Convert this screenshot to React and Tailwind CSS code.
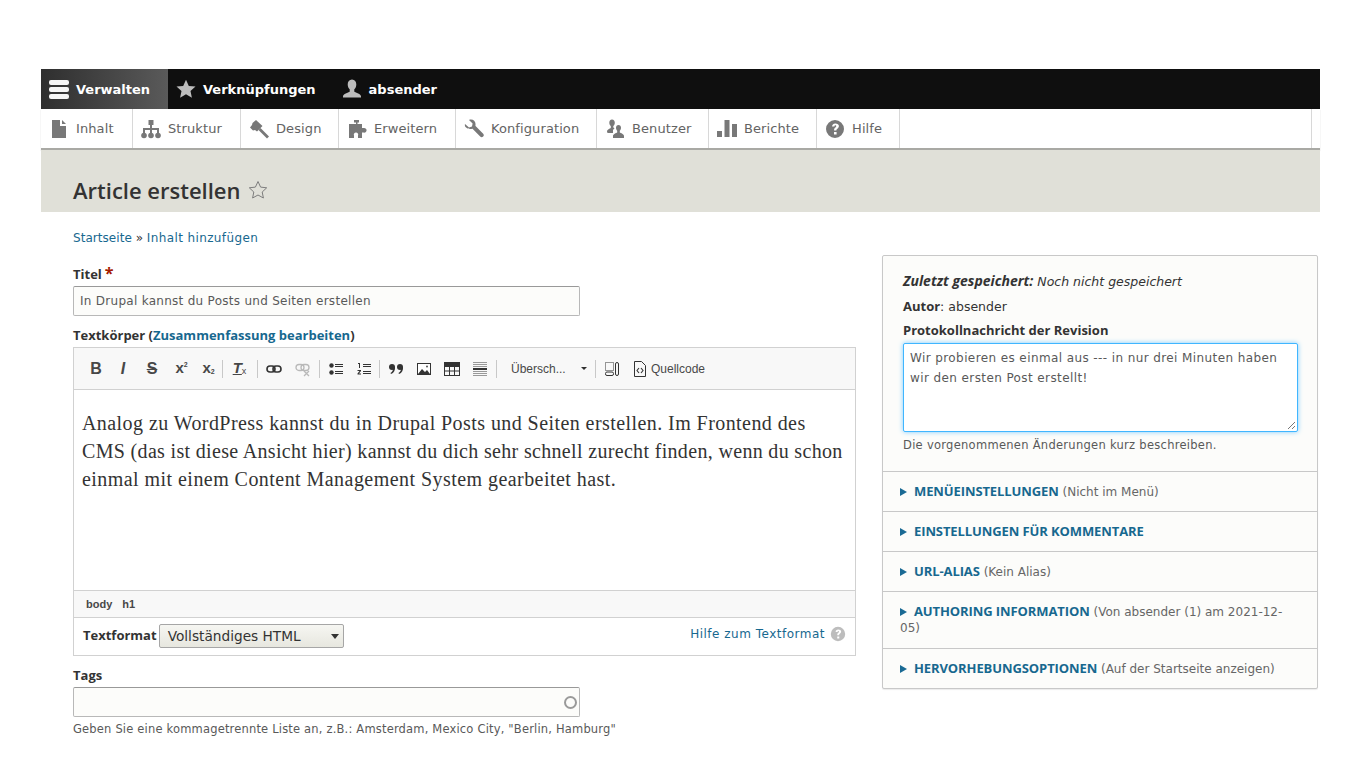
import React from "react";

const sans = "font-['DejaVu_Sans',Verdana,sans-serif]";

const Svg = ({ size = 20, vb = "0 0 20 20", fill = "#787878", className = "", children }) => (
  <svg width={size} height={size} viewBox={vb} fill={fill} className={"shrink-0 " + className}>
    {children}
  </svg>
);

// Toolbar icons
const IconPage = () => (
  <Svg>
    <path d="M3 1h8v6h6v12H3z" />
    <path d="M13 1l4 4h-4z" />
  </Svg>
);
const IconTree = () => (
  <Svg>
    <path d="M7.500 1h5v5h-5z" />
    <path d="M9 6h2v3h7v5h-2v-3h-5v3H9v-3H4v3H2V9h7z" />
    <circle cx="3" cy="16.500" r="2.800" />
    <circle cx="10" cy="16.500" r="2.800" />
    <circle cx="17" cy="16.500" r="2.800" />
  </Svg>
);
const IconHammer = () => (
  <Svg>
    <path d="M7 1l6.500 6-5.500 5.500-2-1.500-2 .5L1 8.500 3 6l.5-2z" />
    <path d="M11.500 9L20 17.500 18 19.500 9.500 11z" />
  </Svg>
);
const IconPuzzle = () => (
  <Svg>
    <path d="M7 1h5v2.500h-1.500V5H15v4h1.500a2.400 2.400 0 110 4.600H15V19h-4v-2.500a2.200 2.200 0 10-4 0V19H2V5h7V3.500H7z" />
  </Svg>
);
const IconWrench = () => (
  <Svg>
    <path d="M1 5l4 3.500 3-1 .6-3L5 1c3.400-1.400 7 1 6.500 4.800-.1.700-.1 1 .3 1.400l7.400 7.600c.9 1 .7 2-.1 2.800s-1.900 1-2.900-.1L9 10.200c-.4-.4-.7-.4-1.400-.3C3.800 10.500 0 8.500 1 5z" />
  </Svg>
);
const IconPeople = () => (
  <Svg>
    <path d="M7 .5c1.800 0 2.800 1.400 2.800 3.200 0 1.500-.7 2.700-1.500 3.300v1.600l1.200.6-1.500 1.800V14H2.500L2 12.500c0-2 3-3 3.800-3.500V7C5 6.400 4.300 5.200 4.300 3.700 4.300 1.900 5.200.5 7 .5z" />
    <path d="M13.500 6c1.600 0 2.500 1.300 2.500 2.800 0 1.300-.6 2.400-1.200 3v1.700c1 .6 4.200 1.500 4.200 3.500v2H8v-2c0-2 3.200-2.900 4.200-3.500v-1.700c-.6-.6-1.200-1.700-1.200-3C11 7.300 11.900 6 13.500 6z" />
  </Svg>
);
const IconBars = () => (
  <Svg>
    <path d="M0 12h5v6H0zM7.500 1h5v17h-5zM15 5h5v13h-5z" />
  </Svg>
);
const IconHelp = ({ size = 20, fill = "#787878" }) => (
  <Svg size={size} fill={fill}>
    <path
      fillRule="evenodd"
      d="M10 1a9 9 0 110 18 9 9 0 010-18zM7 7.600h2.400c.1-.9.400-1.300 1-1.300.5 0 .9.300.9.800s-.3.800-.9 1.300c-.9.700-1.300 1.300-1.300 2.500v.6h2.300v-.4c0-.6.300-.9.900-1.400.9-.7 1.600-1.400 1.600-2.700 0-1.700-1.600-2.600-3.600-2.600-2.100 0-3.200 1.300-3.300 3.400zM9 13h2.600v2.500H9z"
    />
  </Svg>
);
const IconStar = ({ size = 20, fill = "#bdbdbd" }) => (
  <Svg size={size} fill={fill}>
    <path d="M10 .8l2.800 6.100 6.700.7-5 4.500 1.400 6.600L10 15.300l-5.900 3.400 1.400-6.600-5-4.500 6.700-.7z" />
  </Svg>
);
const IconUser = () => (
  <Svg size={20} fill="#bdbdbd">
    <path d="M10 .5c2.800 0 4.300 2.200 4.300 4.900 0 2.200-1 3.900-2 4.800v2.500c1.500.9 6.700 2 6.700 4.800v1H1v-1c0-2.800 5.200-3.900 6.700-4.800v-2.500c-1-.9-2-2.600-2-4.800C5.700 2.700 7.200.5 10 .5z" />
  </Svg>
);

const TopItem = ({ icon, label, active }) => (
  <div
    className={
      "flex h-10 items-center gap-[7px] " +
      (active ? "w-[127px] bg-gradient-to-r from-[#2f2f2f] to-[#5a5a5a] pl-[8px]" : "px-[8px]")
    }
  >
    {icon}
    <span className="pt-[1px] text-[13px] font-bold text-white">{label}</span>
  </div>
);

const TrayItem = ({ icon, label, width }) => (
  <div
    className="flex h-full items-center gap-[7px] border-r border-[#d8d8d8] pl-[8px]"
    style={{ width }}
  >
    {icon}
    <span className="text-[13px] tracking-[0.1px] text-[#636363]">{label}</span>
  </div>
);

// CKEditor button box
const Btn = ({ children, width = 28 }) => (
  <span className="flex h-5 items-center justify-center" style={{ width }}>
    {children}
  </span>
);

const Glyph = ({ className = "", children }) => (
  <span className={"font-['Liberation_Sans',Arial,sans-serif] text-[#474747] " + className}>{children}</span>
);

const Toolbar = () => (
  <div className="flex h-[42px] items-center border-b border-[#d1d1d1] bg-[#f8f8f8] pl-[8px]">
    <Btn><Glyph className="text-[16px] font-bold">B</Glyph></Btn>
    <Btn width={26}><Glyph className="text-[16px] font-bold italic">I</Glyph></Btn>
    <Btn width={32}><Glyph className="text-[16px] font-bold line-through">S</Glyph></Btn>
    <Btn width={27}>
      <Glyph className="text-[15px] font-bold">x</Glyph>
      <Glyph className="-mt-[7px] text-[7px] font-bold">2</Glyph>
    </Btn>
    <Btn width={27}>
      <Glyph className="text-[15px] font-bold">x</Glyph>
      <Glyph className="mt-[7px] text-[7px] font-bold">2</Glyph>
    </Btn>
    <span className="h-[18px] w-px bg-[#c8c8c8]" />
    <Btn width={33}>
      <Glyph className="text-[15px] font-bold italic underline">T</Glyph>
      <Glyph className="mt-[7px] text-[9px]">x</Glyph>
    </Btn>
    <span className="ml-[1px] h-[18px] w-px bg-[#c8c8c8]" />
    <Btn width={32}>
      <svg width="16" height="16" viewBox="0 0 16 16" fill="none" stroke="#333" strokeWidth="1.6">
        <rect x="1" y="5" width="8" height="6" rx="3" />
        <rect x="7" y="5" width="8" height="6" rx="3" />
      </svg>
    </Btn>
    <Btn width={26}>
      <svg width="16" height="16" viewBox="0 0 16 16" fill="none" stroke="#b9b9b9" strokeWidth="1.3">
        <rect x="1" y="3.500" width="8" height="6" rx="3" />
        <rect x="6" y="3.500" width="8" height="6" rx="3" />
        <path d="M9 10l5 5M14 10l-5 5" />
      </svg>
    </Btn>
    <span className="ml-[3px] h-[18px] w-px bg-[#c8c8c8]" />
    <Btn width={31}>
      <svg width="16" height="16" viewBox="0 0 16 16" fill="#333">
        <circle cx="3.500" cy="4.500" r="2.200" />
        <circle cx="3.500" cy="11.500" r="2.200" />
        <path d="M7 3h8v1H7zM7 5h8v1H7zM7 10h8v1H7zM7 12h8v1H7z" />
      </svg>
    </Btn>
    <Btn width={25}>
      <svg width="16" height="16" viewBox="0 0 16 16" fill="#333">
        <path d="M2 2h2v5H3V3H2zM1.500 9H5v1L3 12.500h2v1H1.500v-1l2-2.500h-2zM7 3h8v1H7zM7 5h8v1H7zM7 10h8v1H7zM7 12h8v1H7z" />
      </svg>
    </Btn>
    <span className="ml-[3px] h-[18px] w-px bg-[#c8c8c8]" />
    <Btn width={32}>
      <svg width="16" height="16" viewBox="0 0 16 16" fill="#333">
        <circle cx="4" cy="6" r="3" />
        <path d="M5 6h2c.3 3-1 6-4 7l-.5-1C4 11.300 5 9.500 5 8z" />
        <circle cx="12" cy="6" r="3" />
        <path d="M13 6h2c.3 3-1 6-4 7l-.5-1c1.500-.7 2.500-2.500 2.500-4z" />
      </svg>
    </Btn>
    <Btn width={24}>
      <svg width="16" height="16" viewBox="0 0 16 16">
        <rect x="1.500" y="2.500" width="13" height="11" fill="#fff" stroke="#333" />
        <path d="M2 13l4-5 3 3 2-2 3 4z" fill="#333" />
        <circle cx="11" cy="5.500" r="1" fill="#555" />
      </svg>
    </Btn>
    <Btn width={32}>
      <svg width="16" height="16" viewBox="0 0 16 16" fill="none" stroke="#333">
        <rect x="0.500" y="1.500" width="15" height="13" />
        <path d="M.5 5.500h15M.5 10h15M5.500 5.500v9M10.500 5.500v9" />
        <rect x="0" y="1" width="16" height="4" fill="#333" stroke="none" />
      </svg>
    </Btn>
    <Btn width={24}>
      <svg width="16" height="16" viewBox="0 0 16 16" fill="#333">
        <path d="M1 7h14v2H1z" />
        <path fill="#999" d="M1 1h14v1H1zM1 3h14v1H1zM1 5h14v1H1zM1 10h14v1H1zM1 12h14v1H1zM1 14h14v1H1z" />
      </svg>
    </Btn>
    <span className="ml-[4px] h-[18px] w-px bg-[#c8c8c8]" />
    <div className="flex w-[98px] items-center pl-[14px] font-['Liberation_Sans',Arial,sans-serif] text-[12px] text-[#484848]">
      <span>Übersch...</span>
      <span className="ml-[15px] h-0 w-0 border-x-[3px] border-t-[3px] border-x-transparent border-t-[#2f2f2f]" />
    </div>
    <span className="h-[18px] w-px bg-[#c8c8c8]" />
    <Btn width={32}>
      <svg width="16" height="16" viewBox="0 0 16 16" fill="none" stroke="#333">
        <path d="M1.500 1.500h8v8h-8z" strokeDasharray="1 1" />
        <rect x="1.500" y="11" width="8" height="3.500" rx="1.500" />
        <rect x="11.500" y="1.500" width="3" height="13" rx="1.500" />
      </svg>
    </Btn>
    <span className="flex items-center gap-[4px] pl-[5px]">
      <svg width="14" height="16" viewBox="0 0 14 16" fill="none" stroke="#333">
        <path d="M1.500 .5h7l4 4v11h-11z" />
        <path d="M6 7L4 9.500 6 12M8 7l2 2.500L8 12" strokeWidth="1.100" />
      </svg>
      <span className="font-['Liberation_Sans',Arial,sans-serif] text-[12px] text-[#484848]">Quellcode</span>
    </span>
  </div>
);

const Detail = ({ title, sub, h = 40 }) => (
  <div
    className="border-t border-[#c8c8c8] px-[17px] pt-[11px] text-[12px] leading-[16px] text-[#666]"
    style={{ height: h }}
  >
    <span className="mr-[7px] inline-block h-0 w-0 border-y-[4px] border-l-[7px] border-y-transparent border-l-[#1a6a94]" />
    <span className="font-['Open_Sans',sans-serif] text-[13px] font-bold tracking-[-0.1px] text-[#17688f]">{title}</span>
    {sub && <span> {sub}</span>}
  </div>
);

export default function App() {
  return (
    <div className={"min-h-[768px] bg-white pl-[41px] pr-[46px] pt-[69px] " + sans}>
      {/* Admin toolbar */}
      <div className="flex h-10 items-center bg-[#0f0f0f]">
        <TopItem
          active
          label="Verwalten"
          icon={
            <svg width="20" height="20" viewBox="0 0 20 20" fill="#f5f5f5">
              <rect x="0" y="1" width="20" height="5" rx="2" />
              <rect x="0" y="8" width="20" height="5" rx="2" />
              <rect x="0" y="15" width="20" height="5" rx="2" />
            </svg>
          }
        />
        <TopItem label="Verknüpfungen" icon={<IconStar />} />
        <div className="w-[10px]" />
        <TopItem label="absender" icon={<IconUser />} />
      </div>

      {/* Tray */}
      <div className="h-[41px] border-b-2 border-[#a9a9a4] bg-white shadow-[0_1px_1px_rgba(0,0,0,0.2)]">
        <div className="flex h-[39px]">
          <TrayItem width={92} label="Inhalt" icon={<IconPage />} />
          <TrayItem width={108} label="Struktur" icon={<IconTree />} />
          <TrayItem width={98} label="Design" icon={<IconHammer />} />
          <TrayItem width={117} label="Erweitern" icon={<IconPuzzle />} />
          <TrayItem width={141} label="Konfiguration" icon={<IconWrench />} />
          <TrayItem width={112} label="Benutzer" icon={<IconPeople />} />
          <TrayItem width={108} label="Berichte" icon={<IconBars />} />
          <TrayItem width={83} label="Hilfe" icon={<IconHelp />} />
          <div className="flex-1" />
          <div className="w-[9px] border-l border-[#d8d8d8]" />
        </div>
      </div>

      {/* Page title */}
      <div className="flex h-[62px] items-center bg-[#e0e0d8] pl-[32px] pt-[18px]">
        <h1 className="font-['Open_Sans',sans-serif] text-[22px] font-semibold text-[#333]">
          Article erstellen
        </h1>
        <svg width="20" height="20" viewBox="0 0 20 20" fill="none" stroke="#7d7d7d" className="ml-[7px]">
          <path d="M10 1.500l2.600 5.600 6.100.7-4.500 4.200 1.200 6-5.400-3-5.400 3 1.200-6L1.300 7.800l6.100-.7z" />
        </svg>
      </div>

      {/* Breadcrumb */}
      <div className="pl-[32px] pt-[18px] text-[12px] leading-[16px] text-[#333]">
        <a className="tracking-[0.05px] text-[#17688f]">Startseite</a> » <a className="tracking-[0.38px] text-[#17688f]">Inhalt hinzufügen</a>
      </div>

      <div className="flex items-start pl-[32px] pt-[18px]">
        {/* Left column */}
        <div className="w-[783px]">
          <div className="flex h-[20px] items-center pt-[1px] font-['Open_Sans',sans-serif] text-[13px] font-bold text-[#333]">
            Titel <span className="mb-[3px] ml-[3px] text-[16px] leading-none text-[#a51b00]">*</span>
          </div>
          <div className="mt-[2px] flex h-[30px] w-[507px] items-center rounded-[2px] border border-[#b8b8b8] border-t-[#999] bg-[#fcfcfa] pl-[6px] text-[12px] tracking-[0.28px] text-[#595959]">
            In Drupal kannst du Posts und Seiten erstellen
          </div>

          <div className="mt-[10px] h-[21px] font-['Open_Sans',sans-serif] text-[13px] font-bold leading-[18px] text-[#333]">
            Textkörper (<a className="text-[#17688f]">Zusammenfassung bearbeiten</a>)
          </div>

          <div className="border border-[#d1d1d1]">
            <Toolbar />
            <div className="h-[200px] whitespace-nowrap bg-white px-[8px] pt-[19px] font-['Liberation_Serif',Georgia,serif] text-[20px] leading-[28px] text-[#333]">
              <div className="tracking-[0.43px]">Analog zu WordPress kannst du in Drupal Posts und Seiten erstellen. Im Frontend des</div>
              <div className="tracking-[0.33px]">CMS (das ist diese Ansicht hier) kannst du dich sehr schnell zurecht finden, wenn du schon</div>
              <div className="tracking-[0.45px]">einmal mit einem Content Management System gearbeitet hast.</div>
            </div>
            <div className="flex h-[28px] items-center gap-[10px] border-y border-[#d1d1d1] bg-[#f8f8f8] pl-[12px] font-['Liberation_Sans',Arial,sans-serif] text-[11px] font-bold text-[#484848]">
              <span>body</span>
              <span>h1</span>
            </div>
            <div className="flex h-[37px] items-center justify-between px-[9px] pb-[1px]">
              <div className="flex items-center gap-[2px]">
                <span className="font-['Open_Sans',sans-serif] text-[13px] font-bold text-[#333]">Textformat</span>
                <div className="flex h-[24px] w-[185px] items-center justify-between rounded-[2px] border border-[#a6a6a6] bg-gradient-to-b from-[#f6f6f2] to-[#e7e7df] pl-[8px] pr-[4px] text-[13.7px] text-[#333]">
                  <span>Vollständiges HTML</span>
                  <span className="h-0 w-0 border-x-[4px] border-t-[5px] border-x-transparent border-t-[#333]" />
                </div>
              </div>
              <div className="flex items-center gap-[5px] pb-[5px]">
                <a className="text-[12px] tracking-[0.5px] text-[#17688f]">Hilfe zum Textformat</a>
                <IconHelp size={16} fill="#bdbdbd" />
              </div>
            </div>
          </div>

          <div className="mt-[10px] h-[20px] font-['Open_Sans',sans-serif] text-[13px] font-bold leading-[18px] text-[#333]">Tags</div>
          <div className="mt-[1px] flex h-[30px] w-[507px] items-center justify-end rounded-[2px] border border-[#b8b8b8] border-t-[#999] bg-[#fcfcfa] pr-[2px]">
            <span className="h-[13px] w-[13px] rounded-full border-2 border-[#9a9a9a]" />
          </div>
          <p className="mt-[3px] text-[11.5px] leading-[18px] tracking-[0.18px] text-[#595959]">
            Geben Sie eine kommagetrennte Liste an, z.B.: Amsterdam, Mexico City, "Berlin, Hamburg"
          </p>
        </div>

        {/* Right column */}
        <div className="-mt-[9px] ml-[26px] w-[436px] rounded-[2px] border border-[#c8c8c8] bg-[#fcfcfa] shadow-[0_1px_1px_rgba(0,0,0,0.08)]">
          <div className="h-[215px] pl-[20px] pr-[19px] pt-[15px] text-[13px]">
            <div className="h-[20px] text-[12.5px] italic leading-[20px] text-[#333]">
              <span className="font-['Open_Sans',sans-serif] text-[14px] font-bold">Zuletzt gespeichert:</span> Noch nicht gespeichert
            </div>
            <div className="mt-[5px] h-[20px] text-[12.5px] leading-[20px] text-[#333]">
              <span className="font-['Open_Sans',sans-serif] text-[13px] font-bold">Autor</span>: absender
            </div>
            <div className="mt-[4px] h-[20px] font-['Open_Sans',sans-serif] text-[13px] font-bold leading-[20px] text-[#333]">
              Protokollnachricht der Revision
            </div>
            <div className="relative mt-[3px] h-[89px] w-[395px] rounded-[2px] border border-[#40b6ff] bg-white px-[6px] pt-[4px] text-[12px] leading-[20px] tracking-[0.4px] text-[#595959] shadow-[0_0_5px_#7ecbff]">
              Wir probieren es einmal aus --- in nur drei Minuten haben wir den ersten Post erstellt!
              <svg width="9" height="9" viewBox="0 0 9 9" stroke="#777" className="absolute bottom-[1px] right-[1px]">
                <path d="M1 8l7-7M5 8l3-3" />
              </svg>
            </div>
            <p className="mt-[5px] text-[11.5px] leading-[16px] tracking-[0.28px] text-[#595959]">
              Die vorgenommenen Änderungen kurz beschreiben.
            </p>
          </div>
          <Detail title="MENÜEINSTELLUNGEN" sub="(Nicht im Menü)" />
          <Detail title="EINSTELLUNGEN FÜR KOMMENTARE" />
          <Detail title="URL-ALIAS" sub="(Kein Alias)" />
          <Detail title="AUTHORING INFORMATION" sub="(Von absender (1) am 2021-12-05)" h={57} />
          <Detail title="HERVORHEBUNGSOPTIONEN" sub="(Auf der Startseite anzeigen)" />
        </div>
      </div>
    </div>
  );
}
